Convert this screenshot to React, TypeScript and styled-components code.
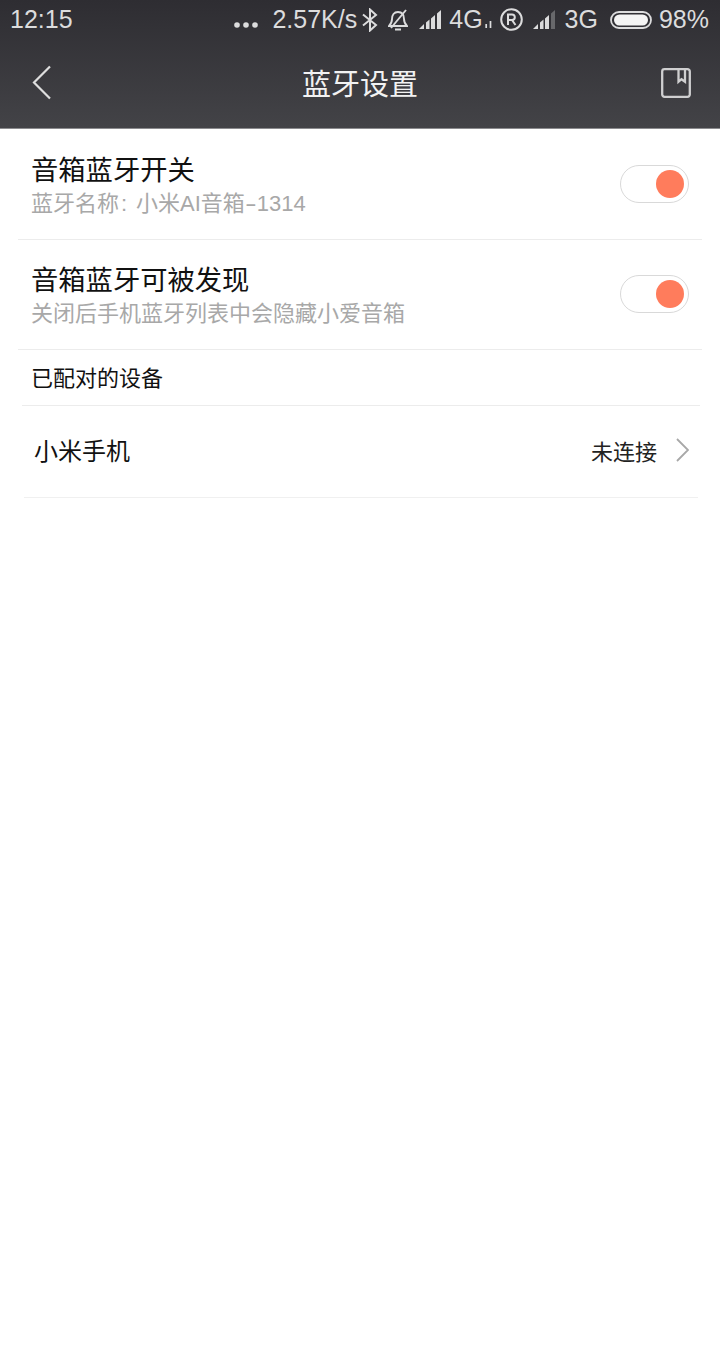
import React from "react";
import styled, { createGlobalStyle } from "styled-components";

const Global = createGlobalStyle`
  html, body { margin: 0; padding: 0; background: #fff; }
  body { font-family: "Liberation Sans", "Noto Sans CJK SC", sans-serif; }
`;

const Page = styled.div`
  width: 720px;
  height: 1360px;
  background: #fff;
  overflow: hidden;
`;

const Top = styled.header`
  height: 129px;
  box-sizing: border-box;
  background: linear-gradient(180deg, #2e2d32 0%, #434347 100%);
  border-bottom: 1px solid #8b8b8e;
  color: #e9e9ea;
`;

const StatusBar = styled.div`
  height: 40px;
  display: flex;
  align-items: center;
  padding: 0 11px 1px 10px;
  box-sizing: border-box;
  font-size: 25px;
  color: #dcdcdd;
`;

const Clock = styled.span`
  flex: 1;
  font-size: 25px;
`;

const StatusText = styled.span<{ $ml?: number }>`
  margin-left: ${(p) => p.$ml ?? 0}px;
  white-space: nowrap;
`;

const StatusIcon = styled.svg<{ $ml?: number; $mt?: number }>`
  display: block;
  flex: none;
  margin-left: ${(p) => p.$ml ?? 0}px;
  margin-top: ${(p) => p.$mt ?? 0}px;
`;

const NavBar = styled.div`
  height: 88px;
  box-sizing: border-box;
  display: flex;
  align-items: center;
  justify-content: space-between;
  padding: 0 29px 3px 32px;
  position: relative;
`;

const NavTitle = styled.div`
  position: absolute;
  left: 0;
  right: 0;
  top: 23px;
  text-align: center;
  font-family: "Noto Sans CJK SC", sans-serif;
  font-size: 29px;
  line-height: 38px;
  color: #f2f2f2;
`;

const List = styled.main`
  padding-top: 1px;
`;

const Row = styled.div`
  height: 110px;
  margin: 0 18px;
  padding: 0 13px 0 13px;
  box-sizing: border-box;
  display: flex;
  align-items: center;
  justify-content: space-between;
  border-bottom: 1px solid #ececec;
`;

const RowText = styled.div`
  display: flex;
  flex-direction: column;
  font-family: "Liberation Sans", "Noto Sans CJK SC", sans-serif;
  margin-top: 1px;
`;

const RowTitle = styled.div`
  font-size: 27.3px;
  line-height: 38px;
  color: #111;
`;

const RowSub = styled.div`
  font-size: 22px;
  line-height: 30px;
  margin-top: -1px;
  color: #a8a8a8;
  white-space: nowrap;
`;

const Colon = styled.span`
  display: inline-block;
  box-sizing: border-box;
  width: 17px;
  padding-left: 2px;
  text-align: left;
`;

const Hyphen = styled.span`
  display: inline-block;
  width: 12px;
  text-align: center;
  transform: scaleX(1.6);
`;

const Toggle = styled.div`
  width: 69px;
  height: 38px;
  margin-bottom: 2px;
  box-sizing: border-box;
  border: 1px solid #d9d9d9;
  border-radius: 19px;
  background: #fff;
  display: flex;
  align-items: center;
  justify-content: flex-end;
  padding-right: 4px;
`;

const Knob = styled.div`
  width: 28px;
  height: 28px;
  border-radius: 50%;
  background: #ff7c5c;
`;

const SectionHeader = styled.div`
  height: 56px;
  margin: 0 20px 0 22px;
  padding: 0 0 4px 9px;
  box-sizing: border-box;
  display: flex;
  align-items: center;
  border-bottom: 1px solid #ececec;
  font-family: "Noto Sans CJK SC", sans-serif;
  font-size: 22px;
  color: #111;
`;

const DeviceRow = styled.div`
  height: 92px;
  margin: 0 22px 0 24px;
  padding: 0 9px 4px 10px;
  box-sizing: border-box;
  display: flex;
  align-items: center;
  justify-content: space-between;
  border-bottom: 1px solid #f0f0f0;
  font-family: "Noto Sans CJK SC", sans-serif;
`;

const DeviceName = styled.div`
  font-size: 24px;
  color: #111;
`;

const DeviceRight = styled.div`
  display: flex;
  align-items: center;
  gap: 19px;
  font-size: 22px;
  color: #222;
`;

const Switch = () => (
  <Toggle>
    <Knob />
  </Toggle>
);

const Signal = ({ faded, ml }: { faded?: boolean; ml: number }) => (
  <StatusIcon width="22" height="19" viewBox="0 0 22 19" $ml={ml}>
    <path d="M0 19l5-5v5z" fill="#dcdcdd" />
    <path d="M7 12.5l3.5-3V19H7z" fill="#dcdcdd" />
    <path d="M12 8.5l4-3.5v14h-4z" fill="#dcdcdd" />
    <path d="M18 3.5L22 0v19h-4z" fill={faded ? "#68686b" : "#dcdcdd"} />
  </StatusIcon>
);

export default function App() {
  return (
    <Page>
      <Global />
      <Top>
        <StatusBar>
          <Clock>12:15</Clock>
          <StatusIcon width="24" height="6" viewBox="0 0 24 6" $mt={10}>
            <circle cx="3" cy="3" r="2.8" fill="#dcdcdd" />
            <circle cx="12" cy="3" r="2.8" fill="#dcdcdd" />
            <circle cx="21" cy="3" r="2.8" fill="#dcdcdd" />
          </StatusIcon>
          <StatusText $ml={14}>2.57K/s</StatusText>
          <StatusIcon width="16" height="24" viewBox="0 0 16 24" $ml={5}>
            <path d="M1 6.5L14 17l-6 5.5v-21L14 7 1 17.5" fill="none" stroke="#dcdcdd" strokeWidth="2" />
          </StatusIcon>
          <StatusIcon width="20" height="22" viewBox="0 0 20 22" $ml={10}>
            <path d="M1 17h18c-2-2-3-4-3-7 0-4-2-7-6-7s-6 3-6 7c0 3-1 5-3 7z" fill="none" stroke="#dcdcdd" strokeWidth="1.9" />
            <path d="M7 20.5h6" fill="none" stroke="#dcdcdd" strokeWidth="2" />
            <path d="M3 19L18 1" fill="none" stroke="#dcdcdd" strokeWidth="1.9" />
          </StatusIcon>
          <Signal ml={11} />
          <StatusText $ml={8}>4G</StatusText>
          <StatusIcon width="8" height="7" viewBox="0 0 8 7" $ml={2} $mt={9}>
            <path d="M1.2 3v4M5.5 0v7" stroke="#dcdcdd" strokeWidth="1.7" />
          </StatusIcon>
          <StatusIcon width="23" height="23" viewBox="0 0 23 23" $ml={7}>
            <circle cx="11.5" cy="11.5" r="10.3" fill="none" stroke="#dcdcdd" strokeWidth="2" />
            <path d="M8 17V6.5h4a2.8 2.8 0 0 1 0 5.6H8M12 12l3.5 5" fill="none" stroke="#dcdcdd" strokeWidth="2" />
          </StatusIcon>
          <Signal faded ml={10} />
          <StatusText $ml={10}>3G</StatusText>
          <StatusIcon width="42" height="18" viewBox="0 0 42 18" $ml={12}>
            <rect x="1" y="1" width="40" height="16" rx="8" fill="none" stroke="#dcdcdd" strokeWidth="1.8" />
            <rect x="4" y="3.5" width="34" height="11" rx="5.5" fill="#f4f4f4" />
          </StatusIcon>
          <StatusText $ml={7}>98%</StatusText>
        </StatusBar>
        <NavBar>
          <svg width="20" height="35" viewBox="0 0 20 35">
            <path d="M18 1.5L2 17.5l16 16" fill="none" stroke="#dedede" strokeWidth="2.2" />
          </svg>
          <NavTitle>蓝牙设置</NavTitle>
          <svg width="30" height="30" viewBox="0 0 30 30">
            <path d="M3.5 1.2h23a2.3 2.3 0 0 1 2.3 2.3v23a2.3 2.3 0 0 1-2.3 2.3h-23a2.3 2.3 0 0 1-2.3-2.3v-23a2.3 2.3 0 0 1 2.3-2.3z M17.5 1.2v12.5l3-2.5 3.5 2.5V1.2" fill="none" stroke="#cfcfd0" strokeWidth="2.3" />
          </svg>
        </NavBar>
      </Top>
      <List>
        <Row>
          <RowText>
            <RowTitle>音箱蓝牙开关</RowTitle>
            <RowSub>蓝牙名称<Colon>:</Colon>小米AI音箱<Hyphen>-</Hyphen>1314</RowSub>
          </RowText>
          <Switch />
        </Row>
        <Row>
          <RowText>
            <RowTitle>音箱蓝牙可被发现</RowTitle>
            <RowSub>关闭后手机蓝牙列表中会隐藏小爱音箱</RowSub>
          </RowText>
          <Switch />
        </Row>
        <SectionHeader>已配对的设备</SectionHeader>
        <DeviceRow>
          <DeviceName>小米手机</DeviceName>
          <DeviceRight>
            未连接
            <svg width="13" height="24" viewBox="0 0 13 24">
              <path d="M1 1l11 11L1 23" fill="none" stroke="#a8a8a8" strokeWidth="1.8" />
            </svg>
          </DeviceRight>
        </DeviceRow>
      </List>
    </Page>
  );
}
